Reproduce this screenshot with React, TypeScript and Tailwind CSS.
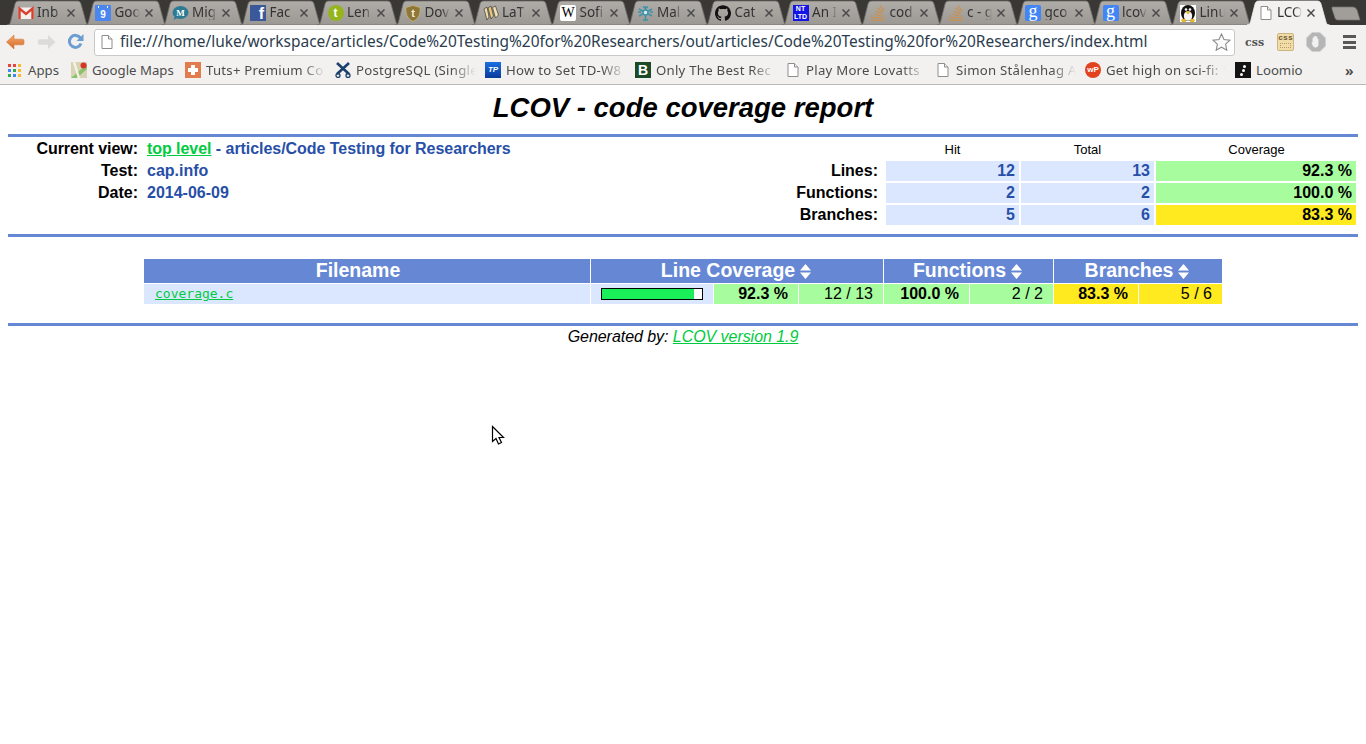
import React from "react";
import { SiGithub, SiStackoverflow } from "react-icons/si";

const Doc = ({ c = "#8d8d8d" }: { c?: string }) => (
  <svg width="16" height="16" viewBox="0 0 16 16" fill="none">
    <path d="M3 1.500h6.500L13 5v9.500H3z" fill="#fff" stroke={c} />
    <path d="M9.500 1.500V5H13" fill="#eee" stroke={c} />
  </svg>
);
const Gmail = () => (
  <svg width="16" height="16" viewBox="0 0 16 16">
    <rect x="0.5" y="2.5" width="15" height="11.5" fill="#f4f0ee" />
    <path d="M1.500 14V3.500L8 9l6.500-5.500V14" fill="none" stroke="#d8412f" strokeWidth="2.400" />
  </svg>
);
const GoogleG = () => (
  <span className="flex h-4 w-4 items-center justify-center overflow-hidden rounded-[2px] bg-[#4285f4] font-['Liberation_Serif',serif] text-[18px] leading-none text-white">
    <span className="-mt-[4px]">g</span>
  </span>
);
const Calendar = () => (
  <span className="relative flex h-4 w-4 items-end justify-center rounded-[1px] bg-[#4a86ee] font-['Liberation_Sans',sans-serif] text-[10px] font-bold leading-[12px] text-white">
    9
    <span className="absolute left-[3px] top-[1px] h-[2px] w-[1px] bg-white" />
    <span className="absolute right-[3px] top-[1px] h-[2px] w-[1px] bg-white" />
  </span>
);
const Mig = () => (
  <svg width="17" height="16" viewBox="0 0 17 16">
    <ellipse cx="8.500" cy="7.500" rx="8" ry="6.500" fill="#2c7a94" />
    <path d="M3 11l-1.500 4 5-2.500z" fill="#2c7a94" />
    <text x="8.500" y="10.500" textAnchor="middle" fontSize="9" fontWeight="700" fill="#fff" fontFamily="Liberation Serif">M</text>
  </svg>
);
const Fb = () => (
  <span className="flex h-4 w-4 items-end justify-end bg-[#3b5998] pr-[2px] font-['Liberation_Sans',sans-serif] text-[16px] font-bold leading-[15px] text-white">f</span>
);
const Tumb = () => (
  <span className="flex h-4 w-4 items-center justify-center rounded-full bg-[#95b51c] font-['Liberation_Sans',sans-serif] text-[12px] font-bold leading-none text-white">t</span>
);
const Shield = () => (
  <svg width="16" height="17" viewBox="0 0 16 17">
    <path d="M8 .5l7 2c.5 6-1 11-7 14-6-3-7.500-8-7-14z" fill="#8d7636" stroke="#c7b177" strokeWidth=".8" />
    <text x="8" y="12" textAnchor="middle" fontSize="11" fontWeight="700" fill="#f6efd9" fontFamily="Liberation Sans">t</text>
  </svg>
);
const Books = () => (
  <svg width="16" height="16" viewBox="0 0 16 16">
    <path d="M1 4l3-2 2 10-2 3z" fill="#efdca6" stroke="#3a3a3a" strokeWidth=".7" />
    <path d="M5 3l3-2 2.500 10-2.500 3z" fill="#e8c777" stroke="#3a3a3a" strokeWidth=".7" />
    <path d="M9.500 2.500l3-1.500 3 9-3 3z" fill="#f1e0b4" stroke="#3a3a3a" strokeWidth=".7" />
  </svg>
);
const Wiki = () => (
  <span className="flex h-4 w-4 items-center justify-center rounded-[2px] bg-white font-['Liberation_Serif',serif] text-[14px] leading-none text-black">W</span>
);
const Flake = () => (
  <svg width="17" height="16" viewBox="0 0 17 16" stroke="#3f93a8" strokeWidth="1.500" fill="none">
    <path d="M8.500 1v14M2 4l13 7M15 4L2 11M6 15h5M6 1.500l2.500 2 2.500-2M1 7h3M13 7h3" />
    <circle cx="8.500" cy="7.500" r="2.500" fill="#d8edf2" />
  </svg>
);
const Ntl = () => (
  <span className="flex h-4 w-4 flex-col items-center justify-center bg-[#1414e6] font-['Liberation_Sans',sans-serif] text-[7px] font-bold leading-[8px] text-white">
    <span>NT</span>
    <span>LTD</span>
  </span>
);
const SO = () => <SiStackoverflow size={16} color="#c4935a" />;
const Tux = () => (
  <svg width="16" height="17" viewBox="0 0 16 17">
    <rect width="16" height="17" fill="#fff" />
    <ellipse cx="8" cy="8" rx="7" ry="8" fill="#111" />
    <ellipse cx="8" cy="11" rx="4.200" ry="4.800" fill="#f4f4f4" />
    <circle cx="6" cy="4.500" r="1.300" fill="#fff" />
    <circle cx="10" cy="4.500" r="1.300" fill="#fff" />
    <path d="M5.500 6.500h5L8 9.500z" fill="#e8b81e" />
    <path d="M1 14.500l4-1 1 3.500H2zM15 14.500l-4-1-1 3.500h4z" fill="#e8b81e" />
  </svg>
);
const Closex = ({ c = "#4a4a4a" }: { c?: string }) => (
  <svg width="8" height="8" viewBox="0 0 8 8" stroke={c} strokeWidth="1.500" className="shrink-0">
    <path d="M.5.5l7 7M7.500.5l-7 7" />
  </svg>
);

const tabs: { t: string; i: React.ReactNode }[] = [
  { t: "Inb", i: <Gmail /> },
  { t: "Goo", i: <Calendar /> },
  { t: "Mig", i: <Mig /> },
  { t: "Fac", i: <Fb /> },
  { t: "Len", i: <Tumb /> },
  { t: "Dov", i: <Shield /> },
  { t: "LaT", i: <Books /> },
  { t: "Sofi", i: <Wiki /> },
  { t: "Mal", i: <Flake /> },
  { t: "Cat", i: <SiGithub size={16} color="#111" /> },
  { t: "An I", i: <Ntl /> },
  { t: "cod", i: <SO /> },
  { t: "c - g", i: <SO /> },
  { t: "gco", i: <GoogleG /> },
  { t: "lcov", i: <GoogleG /> },
  { t: "Linu", i: <Tux /> },
];

const TabShape = ({ active }: { active?: boolean }) => (
  <svg className="absolute left-0 top-0" width="84" height="25" viewBox="0 0 84 25">
    <defs>
      <linearGradient id="tg" x1="0" x2="0" y1="0" y2="1">
        <stop offset="0" stopColor="#b0ada9" />
        <stop offset="1" stopColor="#9b9894" />
      </linearGradient>
    </defs>
    <path
      d="M0 25c2 0 3-1 3.500-3L8 4c.7-2 1.500-3 4-3h58c2.500 0 3.500 1 4 3l5 18c.5 2 1.500 3 3.500 3z"
      fill={active ? "#f2f1f0" : "url(#tg)"}
      stroke={active ? "#f2f1f0" : "#6f6d69"}
      strokeWidth=".8"
    />
  </svg>
);

const Tab = ({ t, i, active }: { t: string; i: React.ReactNode; active?: boolean }) => (
  <div className={`relative h-[25px] w-[77.5px] shrink-0 ${active ? "z-10" : ""}`}>
    <TabShape active={active} />
    <div className="relative flex h-[25px] items-center pl-[10px] pt-[1px]">
      <span className="flex h-4 w-[17px] shrink-0 items-center justify-center">{i}</span>
      <span className="ml-[3px] w-[25px] overflow-hidden whitespace-nowrap text-[13.5px] leading-none text-[#333] [mask-image:linear-gradient(to_right,black_70%,transparent)]">
        {t}
      </span>
      <span className="ml-[5px]">
        <Closex />
      </span>
    </div>
  </div>
);

const Back = () => (
  <svg width="20" height="18" viewBox="0 0 20 18">
    <defs>
      <linearGradient id="bk" x1="0" x2="0" y1="0" y2="1">
        <stop offset="0" stopColor="#f3a869" />
        <stop offset="1" stopColor="#d8682c" />
      </linearGradient>
    </defs>
    <path d="M9 2L1.500 9 9 16v-4.200h8.500a1.500 1.500 0 0 0 1.500-1.500V7.700a1.500 1.500 0 0 0-1.500-1.500H9z" fill="url(#bk)" stroke="#d07a3a" strokeWidth=".6" />
  </svg>
);
const Fwd = () => (
  <svg width="20" height="18" viewBox="0 0 20 18">
    <path d="M11 2l7.500 7L11 16v-4.200H2.500A1.500 1.500 0 0 1 1 10.300V7.700a1.500 1.500 0 0 1 1.500-1.500H11z" fill="#dcdbd9" />
  </svg>
);
const Reload = () => (
  <svg width="17" height="17" viewBox="0 0 17 17" fill="none">
    <path d="M13.500 5.200A6 6 0 1 0 14 10.500" stroke="#6c9ed1" strokeWidth="3" />
    <path d="M16.500 1v7h-7z" fill="#6c9ed1" />
  </svg>
);
const Star = () => (
  <svg width="19" height="18" viewBox="0 0 19 18" fill="#fafafa" stroke="#8a8a8a" strokeWidth="1.100">
    <path d="M9.500 1l2.500 5.500 6 .7-4.400 4 1.200 6-5.300-3-5.300 3 1.200-6-4.400-4 6-.7z" />
  </svg>
);
const CssEd = () => (
  <span className="relative flex h-[18px] w-[17px] flex-col items-center overflow-hidden rounded-[2px] border border-[#cdb57f] bg-[#f0dca8] font-['Liberation_Mono',monospace] text-[8px] font-bold leading-[8px] text-[#6e5a34]">
    <span>css</span>
    <span className="mt-[1px] h-[5px] w-[11px] border border-dotted border-[#b89a60]" />
  </span>
);
const Stop = () => (
  <svg width="20" height="20" viewBox="0 0 20 20">
    <path d="M6 .5h8L19.500 6v8L14 19.500H6L.5 14V6z" fill="#b5b5b5" stroke="#d0d0d0" />
    <path d="M6.500 10V6h1v3V4.500h1.300V9V4h1.300v5V4.800h1.300V10V7h1.100v5c0 2-1 3.500-3 3.500s-2.500-1-3-2.500l-1-2z" fill="#f1f1f1" />
  </svg>
);
const Burger = () => (
  <span className="flex h-[14px] w-[13px] flex-col justify-between">
    <span className="h-[3px] bg-[#585858]" />
    <span className="h-[3px] bg-[#585858]" />
    <span className="h-[3px] bg-[#585858]" />
  </span>
);
const AppsIcon = () => (
  <span className="grid h-[13px] w-[13px] grid-cols-3 gap-[2px]">
    {["#e8453c", "#e8453c", "#f9bb2d", "#4285f4", "#34a853", "#f9bb2d", "#34a853", "#4285f4", "#f9bb2d"].map((c, i) => (
      <span key={i} className="h-[3px] w-[3px]" style={{ background: c }} />
    ))}
  </span>
);
const Maps = () => (
  <svg width="16" height="16" viewBox="0 0 16 16">
    <rect width="16" height="16" fill="#d9d3b6" />
    <path d="M0 16L16 2v5L6 16z" fill="#8cc26e" />
    <path d="M3 0l5 16" stroke="#f4f1e2" strokeWidth="2.500" />
    <circle cx="12.500" cy="3.500" r="3" fill="#d8352a" />
  </svg>
);
const Tuts = () => (
  <span className="flex h-4 w-4 items-center justify-center bg-[#e27c4e]">
    <span className="relative h-[10px] w-[10px]">
      <span className="absolute left-[3px] top-0 h-[10px] w-1 bg-white" />
      <span className="absolute left-0 top-[3px] h-1 w-[10px] bg-white" />
    </span>
  </span>
);
const Pg = () => (
  <svg width="16" height="16" viewBox="0 0 16 16" fill="none">
    <path d="M2 1l12 11M14 1L2 12" stroke="#1c3f6e" strokeWidth="2.600" />
    <circle cx="3" cy="13.500" r="2" stroke="#1c3f6e" strokeWidth="1.300" />
    <circle cx="13" cy="13.500" r="2" stroke="#1c3f6e" strokeWidth="1.300" />
  </svg>
);
const Tp = () => (
  <span className="flex h-4 w-4 items-center justify-center bg-gradient-to-b from-[#1c6fe0] to-[#0a3a9c] font-['Liberation_Sans',sans-serif] text-[8px] font-bold italic leading-none text-white">TP</span>
);
const BB = () => (
  <span className="flex h-4 w-4 items-center justify-center bg-[#1d4a26] font-['Liberation_Sans',sans-serif] text-[14px] font-bold leading-none text-white">B</span>
);
const Wp = () => (
  <span className="flex h-4 w-4 items-center justify-center rounded-full bg-[#e2431e] font-['Liberation_Sans',sans-serif] text-[8px] font-bold leading-none text-white">wP</span>
);
const Loomio = () => (
  <span className="flex h-4 w-4 flex-col items-center justify-center gap-[1px] bg-[#141414]">
    <span className="ml-[3px] h-[3px] w-[3px] rounded-full bg-white" />
    <span className="h-[3px] w-[3px] rounded-full bg-white" />
    <span className="mr-[3px] h-[3px] w-[3px] rounded-full bg-white" />
  </span>
);

const marks: { t: string; i: React.ReactNode }[] = [
  { t: "Tuts+ Premium Co", i: <Tuts /> },
  { t: "PostgreSQL (Single", i: <Pg /> },
  { t: "How to Set TD-W8", i: <Tp /> },
  { t: "Only The Best Rec", i: <BB /> },
  { t: "Play More Lovatts", i: <Doc /> },
  { t: "Simon Stålenhag A", i: <Doc /> },
  { t: "Get high on sci-fi: 1", i: <Wp /> },
];

const Chrome = () => (
  <div className="font-['Noto_Sans',sans-serif]">
    <div className="flex h-[25px] overflow-hidden bg-[#3a3835] pl-[7px]">
      {tabs.map((x) => (
        <Tab key={x.t} t={x.t} i={x.i} />
      ))}
      <Tab t="LCO" i={<Doc />} active />
      <div className="ml-[6px] mt-[6px]">
        <svg width="30" height="15" viewBox="0 0 30 15">
          <path d="M1 1h20c3 0 4 1 5 3l3 10H7c-2 0-2.500-1-3-2L1 3z" fill="#a19e9a" stroke="#77746f" strokeWidth=".7" />
        </svg>
      </div>
    </div>
    <div className="flex h-[32px] items-center bg-[#f2f1f0] pl-[5px] pt-[2px]">
      <Back />
      <span className="ml-[12px]"><Fwd /></span>
      <span className="ml-[10px] -mt-[1px]"><Reload /></span>
      <div className="ml-[10px] flex h-[27px] w-[1141px] items-center rounded-[3px] border border-[#c9c9c7] bg-white pl-[4px] pr-[3px]">
        <Doc />
        <span className="ml-[5px] flex-1 whitespace-nowrap text-[15.46px] leading-none text-[#2b3c4e]">
          file:///home/luke/workspace/articles/Code%20Testing%20for%20Researchers/out/articles/Code%20Testing%20for%20Researchers/index.html
        </span>
        <Star />
      </div>
      <span className="ml-[10px] w-[20px] font-['DejaVu_Serif',serif] text-[11px] font-bold leading-none text-[#555]">css</span>
      <span className="ml-[12px]"><CssEd /></span>
      <span className="ml-[12px]"><Stop /></span>
      <span className="ml-[17px]"><Burger /></span>
    </div>
    <div className="flex h-[28px] items-center border-b border-[#b9b9b7] bg-[#f2f1f0] pl-[8px] text-[13.2px] text-[#4c4c4c]">
      <div className="flex w-[63px] items-center gap-[7px]">
        <AppsIcon />
        <span className="pt-px">Apps</span>
      </div>
      <div className="flex w-[114px] items-center gap-[5px]">
        <Maps />
        <span className="whitespace-nowrap pt-px">Google Maps</span>
      </div>
      {marks.map((m) => (
        <div key={m.t} className="flex w-[150px] items-center gap-[5px]">
          <span className="shrink-0">{m.i}</span>
          <span className="w-[120px] overflow-hidden whitespace-nowrap pt-px tracking-[0.25px] [mask-image:linear-gradient(to_right,black_80%,transparent)]">{m.t}</span>
        </div>
      ))}
      <div className="flex w-[110px] items-center gap-[5px]">
        <Loomio />
        <span className="pt-px">Loomio</span>
      </div>
      <span className="text-[15px] font-semibold leading-none text-[#444]">»</span>
    </div>
  </div>
);

const Rule = () => <div className="h-[3px] bg-[#6688d4]" />;

const Summary = ({ label, hit, total, cov, color }: { label: string; hit: string; total: string; cov: string; color: string }) => (
  <div className="flex h-[22px] pb-[2px] font-bold">
    <div className="w-[113px] pr-[8px] text-right leading-[20px] text-black">{label}</div>
    <div className="w-[133px] bg-[#dae7fe] pr-1 text-right leading-[20px] text-[#284fa8]">{hit}</div>
    <div className="ml-[2px] w-[133px] bg-[#dae7fe] pr-1 text-right leading-[20px] text-[#284fa8]">{total}</div>
    <div className={`ml-[2px] w-[200px] pr-1 text-right leading-[20px] text-black ${color}`}>{cov}</div>
  </div>
);

const Sort = () => (
  <svg width="11" height="15" viewBox="0 0 11 15" fill="#fff" className="ml-[5px]">
    <path d="M5.500 0L11 6.500H0zM0 8.500h11L5.500 15z" />
  </svg>
);

const Head = ({ t, w, sort = true }: { t: string; w: string; sort?: boolean }) => (
  <div className={`flex items-center justify-center bg-[#6688d4] text-[19.5px] font-bold leading-none text-white ${w} ${sort ? "pr-[2px]" : "pr-[18px]"}`}>
    {t}
    {sort && <Sort />}
  </div>
);

const Cell = ({ t, w, bold, color }: { t: string; w: string; bold?: boolean; color: string }) => (
  <div className={`${w} ${color} pr-[10px] text-right leading-[20px] text-black ${bold ? "font-bold" : ""}`}>{t}</div>
);

export default function App() {
  return (
    <div className="relative min-h-[744px] bg-white font-['Liberation_Sans',sans-serif] text-[16px]">
      <Chrome />
      <div className="mx-[8px]">
        <h1 className="flex h-[49px] items-center justify-center pb-[3px] text-[27.5px] font-bold italic leading-none text-black">LCOV - code coverage report</h1>
        <Rule />
        <div className="flex h-[97px] justify-between">
          <div className="flex flex-col pt-[1px] font-bold">
            <div className="flex h-[22px] items-center tracking-[-0.05px]">
              <span className="w-[130px] text-right text-black">Current view:</span>
              <span className="ml-[9px] text-[#284fa8]">
                <a className="text-[#00cb40] underline">top level</a> - articles/Code Testing for Researchers
              </span>
            </div>
            <div className="flex h-[22px] items-center">
              <span className="w-[130px] text-right text-black">Test:</span>
              <span className="ml-[9px] text-[#284fa8]">cap.info</span>
            </div>
            <div className="flex h-[22px] items-center">
              <span className="w-[130px] text-right text-black">Date:</span>
              <span className="ml-[9px] text-[#284fa8]">2014-06-09</span>
            </div>
          </div>
          <div className="mr-[2px]">
            <div className="flex h-[24px] items-end pb-[5px] text-[13px] leading-none text-black">
              <div className="w-[113px]" />
              <div className="w-[133px] text-center">Hit</div>
              <div className="ml-[2px] w-[133px] text-center">Total</div>
              <div className="ml-[2px] w-[200px] pl-px text-center">Coverage</div>
            </div>
            <Summary label="Lines:" hit="12" total="13" cov="92.3 %" color="bg-[#a7fc9d]" />
            <Summary label="Functions:" hit="2" total="2" cov="100.0 %" color="bg-[#a7fc9d]" />
            <Summary label="Branches:" hit="5" total="6" cov="83.3 %" color="bg-[#ffea20]" />
          </div>
        </div>
        <Rule />
        <div className="ml-[136px] mt-[22px] w-[1078px]">
          <div className="flex h-[24px] gap-px">
            <Head t="Filename" w="w-[446px]" sort={false} />
            <Head t="Line Coverage" w="w-[292px]" />
            <Head t="Functions" w="w-[169px]" />
            <Head t="Branches" w="w-[168px]" />
          </div>
          <div className="mt-px flex h-[20px] gap-px">
            <div className="w-[446px] bg-[#dae7fe] pl-[11px] font-['DejaVu_Sans_Mono',monospace] text-[13px] leading-[20px] text-[#00cb40]">
              <a className="underline">coverage.c</a>
            </div>
            <div className="flex w-[122px] items-center justify-center bg-[#dae7fe]">
              <div className="flex h-[12px] w-[102px] border border-black bg-white">
                <div className="h-full w-[92px] bg-[#1aef5a]" />
              </div>
            </div>
            <Cell t="92.3 %" w="w-[84px]" bold color="bg-[#a7fc9d]" />
            <Cell t="12 / 13" w="w-[84px]" color="bg-[#a7fc9d]" />
            <Cell t="100.0 %" w="w-[85px]" bold color="bg-[#a7fc9d]" />
            <Cell t="2 / 2" w="w-[83px]" color="bg-[#a7fc9d]" />
            <Cell t="83.3 %" w="w-[84px]" bold color="bg-[#ffea20]" />
            <Cell t="5 / 6" w="w-[83px]" color="bg-[#ffea20]" />
          </div>
        </div>
        <div className="mt-[19px]">
          <Rule />
        </div>
        <div className="pt-px text-center italic leading-[20px] tracking-[-0.05px] text-black">
          Generated by: <a className="text-[#00cb40] underline">LCOV version 1.9</a>
        </div>
      </div>
      <svg className="absolute left-[491px] top-[425px]" width="14" height="21" viewBox="0 0 14 21">
        <path d="M1.500 1.500v15l3.500-3 2.500 5.500 3-1.500-2.500-5h4.500z" fill="#fff" stroke="#000" strokeWidth="1.200" />
      </svg>
    </div>
  );
}
